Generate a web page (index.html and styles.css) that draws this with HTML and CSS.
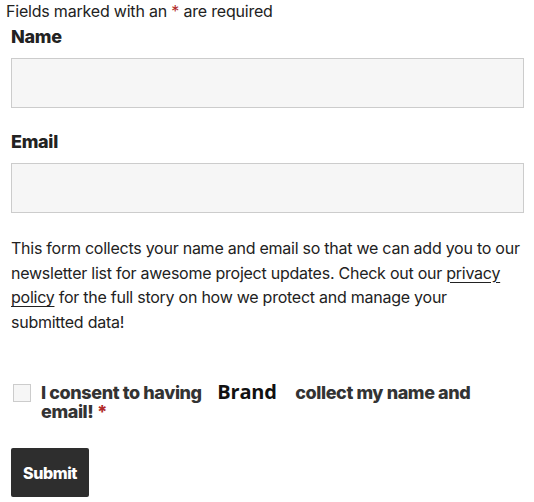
FILE: index.html
```html
<!DOCTYPE html>
<html>
<head>
<meta charset="utf-8">
<link rel="stylesheet" href="styles.css">
</head>
<body>
<p class="notice">Fields marked with an <span class="req">*</span> are required</p>
<form class="form">
  <div class="field">
    <label class="label">Name</label>
    <input class="input" type="text">
  </div>
  <div class="field">
    <label class="label">Email</label>
    <input class="input" type="email">
  </div>
  <p class="info">This form collects your name and email so that we can add you to our newsletter list for awesome project updates. Check out our <a href="#">privacy policy</a> for the full story on how we protect and manage your submitted data!</p>
  <div class="consent">
    <span class="box"></span>
    <span class="consent-text">I consent to having <span class="brand">Brand</span> collect my name and email! <span class="req">*</span></span>
  </div>
  <button class="submit" type="button">Submit</button>
</form>
</body>
</html>
```
FILE: styles.css
```css
html, body {
  margin: 0;
  padding: 0;
  background: #fff;
}
body {
  font-family: Inter, "Liberation Sans", sans-serif;
  color: #222;
  width: 534px;
}
.notice {
  margin: 0;
  padding: 1px 0 0 6px;
  font-size: 16px;
  line-height: 20px;
  letter-spacing: -0.2px;
}
.req {
  color: #b12a2a;
}
.form {
  padding: 0 10px 0 11px;
  display: flex;
  flex-direction: column;
}
.field {
  display: flex;
  flex-direction: column;
}
.label {
  font-weight: 800;
  font-size: 18px;
  line-height: 22px;
  letter-spacing: -0.3px;
  margin-top: 5px;
  margin-bottom: 10px;
}
.field + .field .label {
  margin-top: 23px;
}
.input {
  box-sizing: border-box;
  height: 50px;
  width: 100%;
  margin: 0;
  border: 1px solid #ccc;
  background: #f6f6f6;
  border-radius: 0;
}
.info {
  width: 510px;
  margin: 23px 0 0;
  font-size: 16px;
  line-height: 24.5px;
  letter-spacing: -0.25px;
  color: #222;
}
.info a {
  color: #222;
  text-decoration: underline;
  text-underline-offset: 3px;
}
.consent {
  display: flex;
  align-items: flex-start;
  margin-top: 48px;
  gap: 10px;
}
.box {
  flex: none;
  width: 16px;
  height: 16px;
  margin: 2px 0 0 2px;
  border: 1px solid #ccc;
  background: #f6f6f6;
}
.consent-text {
  max-width: 445px;
  font-weight: 800;
  font-size: 18px;
  line-height: 19px;
  letter-spacing: -0.4px;
  color: #333;
}
.brand {
  font-family: "Open Sans", sans-serif;
  font-weight: 700;
  font-size: 20px;
  line-height: 19px;
  letter-spacing: -0.2px;
  color: #111;
  padding: 0 15px 0 12px;
}
.submit {
  align-self: flex-start;
  margin-top: 27px;
  width: 78px;
  height: 49px;
  border: none;
  border-radius: 2px;
  background: #2e2e2e;
  color: #fff;
  font-family: Inter, sans-serif;
  font-weight: 800;
  font-size: 16px;
  letter-spacing: -0.4px;
  padding: 0;
}
```
